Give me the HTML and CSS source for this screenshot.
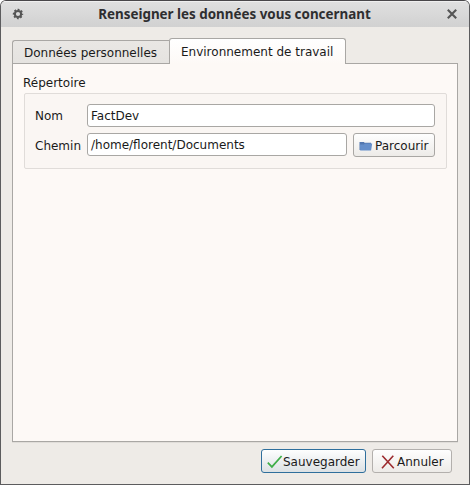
FILE: index.html
```html
<!DOCTYPE html>
<html lang="fr">
<head>
<meta charset="utf-8">
<title>Renseigner les données vous concernant</title>
<link rel="stylesheet" href="styles.css">
</head>
<body>
<div class="window">
  <header class="titlebar">
    <svg class="gear" width="12" height="12" viewBox="0 0 12 12"><circle cx="6" cy="6" r="3.1" fill="none" stroke="#555" stroke-width="2"/><circle cx="6" cy="6" r="4.5" fill="none" stroke="#555" stroke-width="1.4" stroke-dasharray="1.9 1.634" stroke-dashoffset=".95"/></svg>
    <h1>Renseigner les données vous concernant</h1>
    <svg class="close" width="10" height="10" viewBox="0 0 10 10"><path d="M.8.8l8.4 8.4M9.2.8L.8 9.2" stroke="#555" stroke-width="2.1"/></svg>
  </header>
  <main class="content">
    <nav class="tabs">
      <div class="tab"><span>Données personnelles</span></div>
      <div class="tab active"><span>Environnement de travail</span></div>
    </nav>
    <section class="pane">
      <div class="legend"><span>Répertoire</span></div>
      <div class="group">
        <label class="lab">Nom</label>
        <div class="field wide"><span>FactDev</span></div>
        <label class="lab lower">Chemin</label>
        <div class="field"><span>/home/florent/Documents</span></div>
        <button class="btn browse">
          <svg width="14" height="12" viewBox="0 0 14 12"><path d="M.5 10V2h4.2l1 .8H12V10z" fill="#5478b0"/><path d="M1.2 10.5L.9 4.6h4l1-1.1h7.3L12.1 10.5z" fill="#668fca"/></svg>
          <span>Parcourir</span>
        </button>
      </div>
    </section>
    <footer class="actions">
      <button class="btn save">
        <svg width="16" height="16" viewBox="0 0 16 16"><path d="M.8 8.7L4.9 12.9L14.6 2" fill="none" stroke="#3fae49" stroke-width="1.7"/></svg>
        <span>Sauvegarder</span>
      </button>
      <button class="btn cancel">
        <svg width="16" height="16" viewBox="0 0 16 16"><path d="M2.3 1.8L13.8 14.2M13.3 1.8L2 14.2" fill="none" stroke="#9c2a2e" stroke-width="1.6"/></svg>
        <span>Annuler</span>
      </button>
    </footer>
  </main>
</div>
</body>
</html>
```
FILE: styles.css
```css
* { box-sizing: border-box; }
html { background: #fff; }
body { margin: 0; font: 12px/16px "DejaVu Sans", sans-serif; color: #1a1a1a; }
svg { display: block; flex: none; }
span { white-space: nowrap; }
.window {
  width: 470px; height: 485px;
  display: flex; flex-direction: column;
  background: #eeebe7;
  border: 1px solid #5c5c5e; border-top-color: #49474a;
  border-radius: 6px 6px 0 0;
  overflow: hidden;
}
.titlebar {
  height: 26px; flex: none;
  display: flex; align-items: center;
  padding: 0 12px 0 11px;
  background: linear-gradient(#e0e0e0, #d1d1d1);
  box-shadow: inset 0 1px #efefef;
}
.titlebar h1 {
  flex: 1; margin: 0; padding-right: 2px; text-align: center; white-space: nowrap;
  font: bold 13.4px/18px "Noto Sans", sans-serif; color: #2e2e30;
}
.content { flex: 1; display: flex; flex-direction: column; padding: 11px 11px 0; }
.tabs { display: flex; align-items: flex-end; height: 26px; flex: none; position: relative; z-index: 1; }
.tab {
  height: 24px; width: 157px; padding: 4px 0 0 11px;
  background: linear-gradient(#e9e7e4, #e5e3e0);
  border: 1px solid #a9a7a4; border-right: 0;
  border-radius: 3px 0 0 0;
}
.tab.active {
  height: 26px; width: 177px; padding-top: 5px;
  background: linear-gradient(#fff, #fdf9f6);
  border: 1px solid #a9a7a4; border-bottom: 0;
  border-radius: 3px 3px 0 0;
}
.pane {
  height: 379px; margin-top: -1px; padding: 11px 10px 0 10px;
  background: #fdf9f6; border: 1px solid #a9a7a4;
  box-shadow: 0 1px #e0ddd9;
}
.legend { height: 18px; }
.group {
  display: grid; grid-template-columns: 52px 260px 82px;
  grid-template-rows: 24px 25px; row-gap: 5px;
  width: 423px; height: 76px; margin-left: 1px;
  padding: 10px 0 0 10px;
  background: #faf6f3; border: 1px solid #e0dcd9; border-radius: 2px;
}
.lab { padding-top: 4px; }
.lower { padding-top: 5px; }
.field {
  height: 23px; padding: 3px 0 0 3px;
  background: #fff; border: 1px solid #a9a7a4; border-radius: 3px;
}
.wide { grid-column: 2 / 4; width: 348px; }
.btn {
  display: flex; align-items: center;
  height: 24px; margin: 0; padding: 1px 0 0 5px;
  font: inherit; color: inherit;
  background: linear-gradient(#fefefe, #edebe8);
  border: 1px solid #a9a7a4; border-radius: 3px;
}
.btn span { padding-top: 1px; }
.browse { width: 82px; margin-left: 6px; gap: 2px; }
.actions { display: flex; justify-content: flex-end; gap: 6px; padding: 7px 6px 0 0; }
.save { width: 105px; background: linear-gradient(#fdfefe, #dce1e4); border-color: #2f6f9c; }
.cancel { width: 80px; padding-left: 7px; gap: 1px; border-color: #b3b0ad; }
```
